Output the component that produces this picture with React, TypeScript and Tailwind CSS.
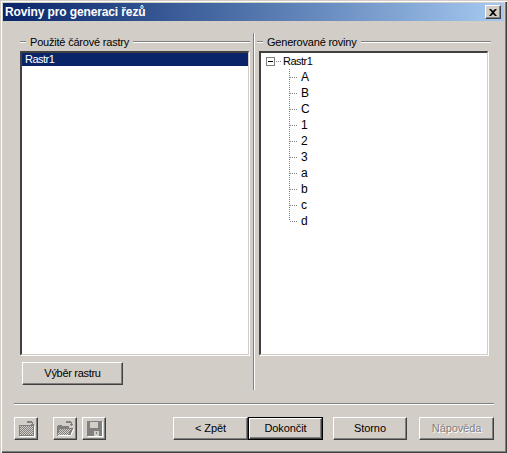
const raised =
  "bg-[#d2cec7] border-t border-l border-t-white border-l-white border-r border-b border-r-[#404040] border-b-[#404040] shadow-[inset_-1px_-1px_0_#808080]";

const etched = "h-[2px] border-t border-t-[#808080] border-b border-b-white";

const sunken =
  "h-[304px] w-[229px] bg-white border-t-2 border-l-2 border-t-[#404040] border-l-[#404040] border-r border-b border-r-[#d2cec7] border-b-[#d2cec7] shadow-[1px_1px_0_#ffffff]";

const GroupHeader = ({ title }: { title: string }) => (
  <div className="flex items-center h-[18px]">
    <div className={`${etched} w-[6px]`} />
    <span className="px-[4px] text-[11px] leading-[13px] tracking-[-0.2px] text-black whitespace-nowrap">{title}</span>
    <div className={`${etched} flex-1`} />
  </div>
);

const Connector = ({ last }: { last?: boolean }) => (
  <svg width="12" height="16" viewBox="0 0 12 16" className="shrink-0" shapeRendering="crispEdges">
    <path
      d={last ? "M1.5 0V8M1.5 8.5H10" : "M1.5 0V16M1.5 8.5H10"}
      stroke="#808080"
      strokeWidth="1"
      strokeDasharray="1 1"
      fill="none"
    />
  </svg>
);

const TreeItem = ({ label, last }: { label: string; last?: boolean }) => (
  <div className="flex items-center h-4 pl-[27px]">
    <Connector last={last} />
    <span className="pl-[1px] text-[12px] leading-4 text-black">{label}</span>
  </div>
);

const ActionButton = ({ label, className, disabled }: { label: string; className: string; disabled?: boolean }) => (
  <button
    className={`${raised} h-[23px] text-[11px] leading-[13px] tracking-[-0.1px] ${disabled ? "text-[#808080] [text-shadow:1px_1px_0_#ffffff]" : "text-black"} ${className}`}
  >
    {label}
  </button>
);

const IconButton = ({ children, className }: { children: React.ReactNode; className?: string }) => (
  <button className={`${raised} w-6 h-[23px] flex items-center justify-center ${className ?? ""}`}>{children}</button>
);

const Dither = ({ id }: { id: string }) => (
  <pattern id={id} width="2" height="2" patternUnits="userSpaceOnUse">
    <rect width="2" height="2" fill="#d2cec7" />
    <rect width="1" height="1" fill="#808080" />
    <rect x="1" y="1" width="1" height="1" fill="#808080" />
  </pattern>
);

export default function App() {
  const items = ["A", "B", "C", "1", "2", "3", "a", "b", "c", "d"];
  return (
    <div
      className="w-[507px] h-[453px] overflow-hidden bg-[#d2cec7] flex flex-col pt-[3px] pl-[3px] pr-[3px] shadow-[inset_1px_1px_0_#d2cec7,inset_2px_2px_0_#ffffff,inset_-1px_-1px_0_#404040,inset_-2px_-2px_0_#808080]"
      style={{ fontFamily: '"Liberation Sans", Arial, sans-serif' }}
    >
      {/* title bar */}
      <div className="h-[18px] shrink-0 flex items-center justify-between pl-[2px] pr-[3px] bg-gradient-to-r from-[#0a246a] to-[#a6caf0]">
        <span className="text-white font-bold text-[12px] leading-4 tracking-[-0.12px] whitespace-nowrap">
          Roviny pro generaci řezů
        </span>
        <button className={`${raised} w-4 h-[14px] flex items-center justify-center`}>
          <svg width="8" height="7" viewBox="0 0 8 7">
            <path d="M0 0h2l2 2 2-2h2L5 3.5 8 7H6L4 5 2 7H0l3-3.5z" fill="#000" />
          </svg>
        </button>
      </div>

      {/* panels */}
      <div className="flex h-[357px] mt-[12px] shrink-0">
        <div className="w-[230px] ml-[17px] flex flex-col">
          <GroupHeader title="Použité čárové rastry" />
          <div className={sunken}>
            <div className="bg-[#0a246a] text-white h-[13px] text-[11px] leading-[13px] tracking-[-0.5px] pl-[3px]">Rastr1</div>
          </div>
          <ActionButton label="Výběr rastru" className="mt-[7px] ml-[2px] w-[101px] tracking-[-0.3px]" />
        </div>

        <div className="w-[2px] ml-[3px] border-l border-l-[#808080] border-r border-r-white" />

        <div className="w-[234px] ml-[2px] flex flex-col">
          <GroupHeader title="Generované roviny" />
          <div className={`${sunken} ml-[2px]`}>
            <div className="flex items-center h-4 pl-[5px]">
              <div className="w-[9px] h-[9px] border border-[#808080] flex items-center justify-center">
                <div className="w-[5px] h-px bg-black" />
              </div>
              <div className="w-[5px] ml-[1px] border-t border-dotted border-t-[#808080]" />
              <span className="pl-[2px] text-[11px] leading-4 tracking-[-0.5px] text-black">Rastr1</span>
            </div>
            {items.map((item, i) => (
              <TreeItem key={item} label={item} last={i === items.length - 1} />
            ))}
          </div>
        </div>
      </div>

      {/* bottom */}
      <div className={`${etched} mt-[13px] ml-[11px] w-[480px] shrink-0`} />
      <div className="flex mt-[12px] ml-[11px] shrink-0">
        <IconButton>
          <svg width="18" height="17" viewBox="0 0 18 17" shapeRendering="crispEdges">
            <defs>
              <Dither id="keys" />
            </defs>
            <path d="M10 1h5v1h1v2h1v1h-1v1h-1v-1h-1v-1h1v-1h-5z" fill="#808080" />
            <path d="M2 5h15v11H2z" fill="#808080" />
            <path d="M3 6h13v9H3z" fill="url(#keys)" />
            <path d="M3 16h14V6h1v11H3z" fill="#ffffff" />
          </svg>
        </IconButton>
        <IconButton className="ml-[15px]">
          <svg width="18" height="17" viewBox="0 0 18 17" shapeRendering="crispEdges">
            <defs>
              <Dither id="folder" />
            </defs>
            <path d="M10 1h5v1h1v2h1v1h-1v1h-1v-1h-1v-1h1v-1h-5z" fill="#808080" />
            <path d="M1 6h1V5h4v1h7v2h4v1l-3 7H1z" fill="#808080" />
            <path d="M4 9h11l-3 6H2z" fill="url(#folder)" />
            <path d="M2 16h13v-1h1v-2h1v-2h1V9h-1v2h-1v2h-1v2H2z" fill="#ffffff" />
          </svg>
        </IconButton>
        <IconButton className="ml-[5px]">
          <svg width="18" height="17" viewBox="0 0 18 17" shapeRendering="crispEdges">
            <path d="M2 1h15v15H2z" fill="#808080" />
            <path d="M5 2h8v6H5z" fill="#d2cec7" />
            <path d="M9 11h5v5H9z" fill="#d2cec7" />
            <path d="M11 12h1v2h-1z" fill="#808080" />
            <path d="M3 16h14V2h1v15H3z" fill="#ffffff" />
          </svg>
        </IconButton>
        <ActionButton label="< Zpět" className="ml-[67px] w-[75px]" />
        <button className="w-[75px] h-[23px] border border-black">
          <span className={`${raised} flex h-full items-center justify-center text-[11px] leading-[13px] tracking-[-0.1px] text-black`}>Dokončit</span>
        </button>
        <ActionButton label="Storno" className="ml-[10px] w-[74px]" />
        <ActionButton label="Nápověda" className="ml-[12px] w-[75px]" disabled />
      </div>
    </div>
  );
}
